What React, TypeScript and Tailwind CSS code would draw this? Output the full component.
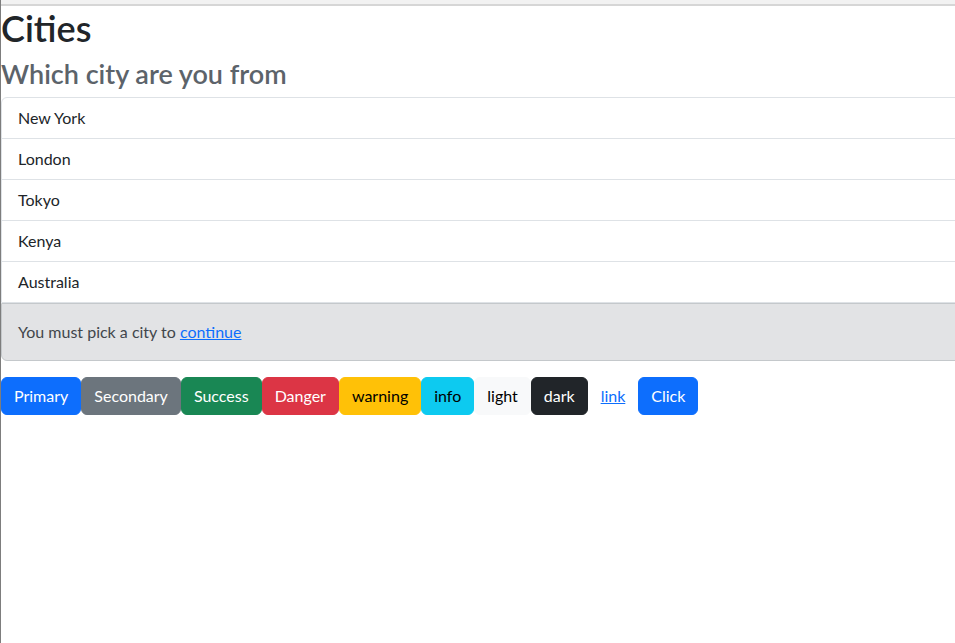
const cities = ["New York", "London", "Tokyo", "Kenya", "Australia"];

const buttons = [
  { label: "Primary", cls: "bg-[#0d6efd] border-[#0d6efd] text-white" },
  { label: "Secondary", cls: "bg-[#6c757d] border-[#6c757d] text-white" },
  { label: "Success", cls: "bg-[#198754] border-[#198754] text-white" },
  { label: "Danger", cls: "bg-[#dc3545] border-[#dc3545] text-white" },
  { label: "warning", cls: "bg-[#ffc107] border-[#ffc107] text-black" },
  { label: "info", cls: "bg-[#0dcaf0] border-[#0dcaf0] text-black" },
  { label: "light", cls: "bg-[#f8f9fa] border-[#f8f9fa] text-black" },
  { label: "dark", cls: "bg-[#212529] border-[#212529] text-white" },
  { label: "link", cls: "bg-transparent border-transparent text-[#0d6efd] underline" },
];

const App = () => {
  return (
    <div className="min-h-screen overflow-hidden bg-white border-l border-[#7d7d7d] text-[#212529] font-['Lato','Liberation_Sans',sans-serif]">
      <div className="h-[6px] bg-[#f2f2f2] border-b-2 border-[#d6d6d6]" />
      <h1 className="text-[36px] leading-[44px] font-semibold mb-2">Cities</h1>
      <h3 className="text-[27px] leading-[32px] font-semibold text-[#5c636a] mb-[7px]">
        Which city are you from
      </h3>
      <div className="w-[calc(100%+8px)]">
        <ul className="border border-[#dee2e6] rounded-t-md">
          {cities.map((city, index) => (
            <li
              key={index}
              className={`px-4 py-2 text-base leading-6 ${
                index > 0 ? "border-t border-[#dee2e6]" : ""
              }`}
            >
              {city}
            </li>
          ))}
        </ul>
        <div className="bg-[#e2e3e5] border border-[#c4c8cb] rounded-b-md px-4 py-4 text-base leading-6 text-[#41464b]">
          You must pick a city to{" "}
          <a href="#" className="text-[#0d6efd] underline">
            continue
          </a>
        </div>
      </div>
      <div className="flex mt-4">
        {buttons.map((b) => (
          <button
            key={b.label}
            type="button"
            className={`border px-3 py-[6px] text-base leading-6 rounded-md ${b.cls}`}
          >
            {b.label}
          </button>
        ))}
        <button
          type="button"
          className="border border-[#0d6efd] bg-[#0d6efd] text-white px-3 py-[6px] text-base leading-6 rounded-md"
        >
          Click
        </button>
      </div>
    </div>
  );
};

export default App;
